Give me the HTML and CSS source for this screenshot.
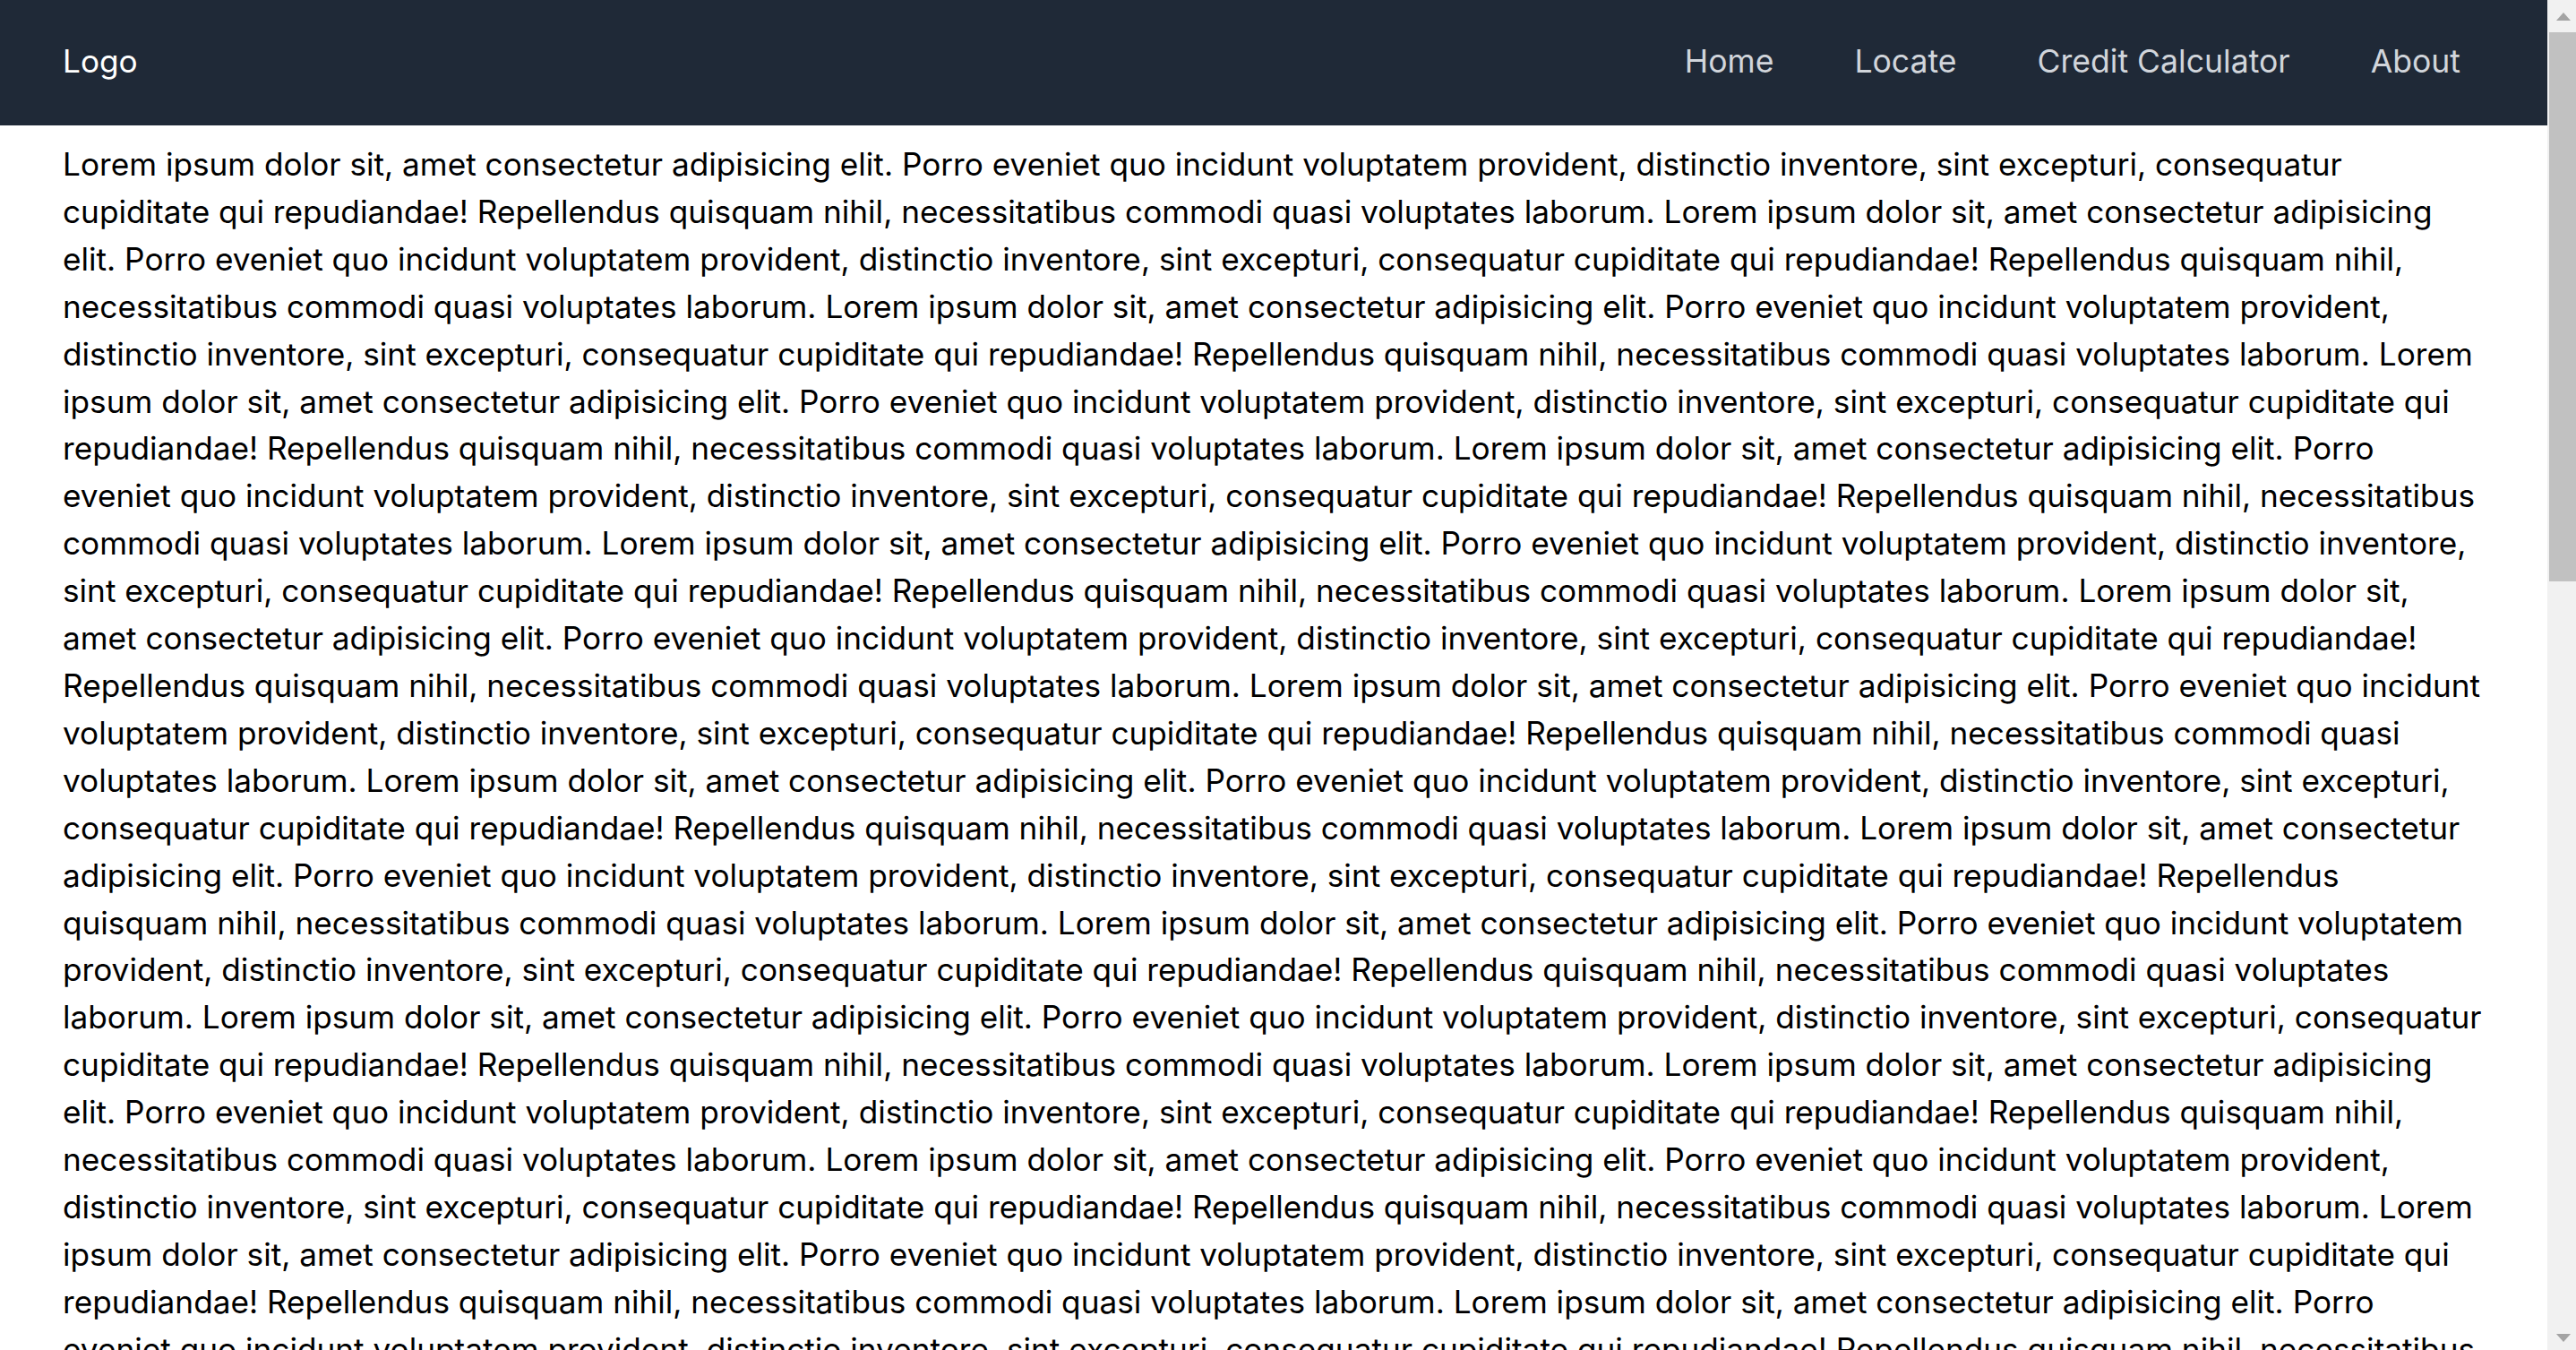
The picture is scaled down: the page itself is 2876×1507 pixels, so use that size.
FILE: index.html
```html
<!DOCTYPE html>
<html lang="en">
<head>
<meta charset="utf-8">
<title>Page</title>
<link rel="stylesheet" href="styles.css">
</head>
<body>
<div class="window">
  <div class="page">
    <header class="navbar">
      <div class="logo">Logo</div>
      <nav class="links">
        <a class="link" href="#">Home</a>
        <a class="link" href="#">Locate</a>
        <a class="link" href="#">Credit Calculator</a>
        <a class="link" href="#">About</a>
      </nav>
    </header>
    <main class="content">
      <p class="text">Lorem ipsum dolor sit, amet consectetur adipisicing elit. Porro eveniet quo incidunt voluptatem provident, distinctio inventore, sint excepturi, consequatur cupiditate qui repudiandae! Repellendus quisquam nihil, necessitatibus commodi quasi voluptates laborum. Lorem ipsum dolor sit, amet consectetur adipisicing elit. Porro eveniet quo incidunt voluptatem provident, distinctio inventore, sint excepturi, consequatur cupiditate qui repudiandae! Repellendus quisquam nihil, necessitatibus commodi quasi voluptates laborum. Lorem ipsum dolor sit, amet consectetur adipisicing elit. Porro eveniet quo incidunt voluptatem provident, distinctio inventore, sint excepturi, consequatur cupiditate qui repudiandae! Repellendus quisquam nihil, necessitatibus commodi quasi voluptates laborum. Lorem ipsum dolor sit, amet consectetur adipisicing elit. Porro eveniet quo incidunt voluptatem provident, distinctio inventore, sint excepturi, consequatur cupiditate qui repudiandae! Repellendus quisquam nihil, necessitatibus commodi quasi voluptates laborum. Lorem ipsum dolor sit, amet consectetur adipisicing elit. Porro eveniet quo incidunt voluptatem provident, distinctio inventore, sint excepturi, consequatur cupiditate qui repudiandae! Repellendus quisquam nihil, necessitatibus commodi quasi voluptates laborum. Lorem ipsum dolor sit, amet consectetur adipisicing elit. Porro eveniet quo incidunt voluptatem provident, distinctio inventore, sint excepturi, consequatur cupiditate qui repudiandae! Repellendus quisquam nihil, necessitatibus commodi quasi voluptates laborum. Lorem ipsum dolor sit, amet consectetur adipisicing elit. Porro eveniet quo incidunt voluptatem provident, distinctio inventore, sint excepturi, consequatur cupiditate qui repudiandae! Repellendus quisquam nihil, necessitatibus commodi quasi voluptates laborum. Lorem ipsum dolor sit, amet consectetur adipisicing elit. Porro eveniet quo incidunt voluptatem provident, distinctio inventore, sint excepturi, consequatur cupiditate qui repudiandae! Repellendus quisquam nihil, necessitatibus commodi quasi voluptates laborum. Lorem ipsum dolor sit, amet consectetur adipisicing elit. Porro eveniet quo incidunt voluptatem provident, distinctio inventore, sint excepturi, consequatur cupiditate qui repudiandae! Repellendus quisquam nihil, necessitatibus commodi quasi voluptates laborum. Lorem ipsum dolor sit, amet consectetur adipisicing elit. Porro eveniet quo incidunt voluptatem provident, distinctio inventore, sint excepturi, consequatur cupiditate qui repudiandae! Repellendus quisquam nihil, necessitatibus commodi quasi voluptates laborum. Lorem ipsum dolor sit, amet consectetur adipisicing elit. Porro eveniet quo incidunt voluptatem provident, distinctio inventore, sint excepturi, consequatur cupiditate qui repudiandae! Repellendus quisquam nihil, necessitatibus commodi quasi voluptates laborum. Lorem ipsum dolor sit, amet consectetur adipisicing elit. Porro eveniet quo incidunt voluptatem provident, distinctio inventore, sint excepturi, consequatur cupiditate qui repudiandae! Repellendus quisquam nihil, necessitatibus commodi quasi voluptates laborum. Lorem ipsum dolor sit, amet consectetur adipisicing elit. Porro eveniet quo incidunt voluptatem provident, distinctio inventore, sint excepturi, consequatur cupiditate qui repudiandae! Repellendus quisquam nihil, necessitatibus commodi quasi voluptates laborum. Lorem ipsum dolor sit, amet consectetur adipisicing elit. Porro eveniet quo incidunt voluptatem provident, distinctio inventore, sint excepturi, consequatur cupiditate qui repudiandae! Repellendus quisquam nihil, necessitatibus commodi quasi voluptates laborum. Lorem ipsum dolor sit, amet consectetur adipisicing elit. Porro eveniet quo incidunt voluptatem provident, distinctio inventore, sint excepturi, consequatur cupiditate qui repudiandae! Repellendus quisquam nihil, necessitatibus commodi quasi voluptates laborum. Lorem ipsum dolor sit, amet consectetur adipisicing elit. Porro eveniet quo incidunt voluptatem provident, distinctio inventore, sint excepturi, consequatur cupiditate qui repudiandae! Repellendus quisquam nihil, necessitatibus commodi quasi voluptates laborum. Lorem ipsum dolor sit, amet consectetur adipisicing elit. Porro eveniet quo incidunt voluptatem provident, distinctio inventore, sint excepturi, consequatur cupiditate qui repudiandae! Repellendus quisquam nihil, necessitatibus commodi quasi voluptates laborum. Lorem ipsum dolor sit, amet consectetur adipisicing elit. Porro eveniet quo incidunt voluptatem provident, distinctio inventore, sint excepturi, consequatur cupiditate qui repudiandae! Repellendus quisquam nihil, necessitatibus commodi quasi voluptates laborum. Lorem ipsum dolor sit, amet consectetur adipisicing elit. Porro eveniet quo incidunt voluptatem provident, distinctio inventore, sint excepturi, consequatur cupiditate qui repudiandae! Repellendus quisquam nihil, necessitatibus commodi quasi voluptates laborum. Lorem ipsum dolor sit, amet consectetur adipisicing elit. Porro eveniet quo incidunt voluptatem provident, distinctio inventore, sint excepturi, consequatur cupiditate qui repudiandae! Repellendus quisquam nihil, necessitatibus commodi quasi voluptates laborum.</p>
    </main>
  </div>
  <div class="scrollbar" aria-hidden="true">
    <div class="sb-button sb-up"><span class="arrow-up"></span></div>
    <div class="sb-thumb"></div>
    <div class="sb-track"></div>
    <div class="sb-button sb-down"><span class="arrow-down"></span></div>
  </div>
</div>
</body>
</html>
```

FILE: styles.css
```css
html, body {
  margin: 0;
  padding: 0;
  height: 100%;
  overflow: hidden;
}

body {
  font-family: Inter, "Noto Sans", "Liberation Sans", sans-serif;
  background: #ffffff;
  color: #000000;
}

.window {
  display: flex;
  flex-direction: row;
  height: 100vh;
  overflow: hidden;
}

.page {
  flex: 1;
  min-width: 0;
  overflow: hidden;
  display: flex;
  flex-direction: column;
}

.navbar {
  flex: 0 0 140px;
  height: 140px;
  background: #1f2937;
  display: flex;
  align-items: center;
  justify-content: space-between;
  padding: 0 97px 2px 70px;
  box-sizing: border-box;
}

.logo {
  color: #ffffff;
  font-size: 35.2px;
  line-height: 1;
}

.links {
  display: flex;
  align-items: center;
  gap: 90px;
}

.link {
  color: #d1d5db;
  text-decoration: none;
  font-size: 35.6px;
  line-height: 1;
}

.content {
  padding: 17px 70px 0 70px;
}

.text {
  margin: 0;
  font-size: 35.2px;
  line-height: 52.9px;
}

.scrollbar {
  flex: 0 0 32px;
  width: 32px;
  background: #f1f1f1;
  display: flex;
  flex-direction: column;
}

.sb-button {
  flex: 0 0 auto;
  display: flex;
  padding-left: 10px;
}

.sb-up {
  height: 36px;
  box-sizing: border-box;
  padding-top: 14px;
}

.sb-down {
  height: 36px;
  box-sizing: border-box;
  padding-top: 18px;
}

.arrow-up {
  width: 0;
  height: 0;
  border-left: 8.5px solid transparent;
  border-right: 8.5px solid transparent;
  border-bottom: 9px solid #a3a3a3;
}

.arrow-down {
  width: 0;
  height: 0;
  border-left: 8.5px solid transparent;
  border-right: 8.5px solid transparent;
  border-top: 9px solid #a3a3a3;
}

.sb-thumb {
  flex: 0 0 613px;
  margin-left: 2px;
  background: #c1c1c1;
}

.sb-track {
  flex: 1;
}
```
